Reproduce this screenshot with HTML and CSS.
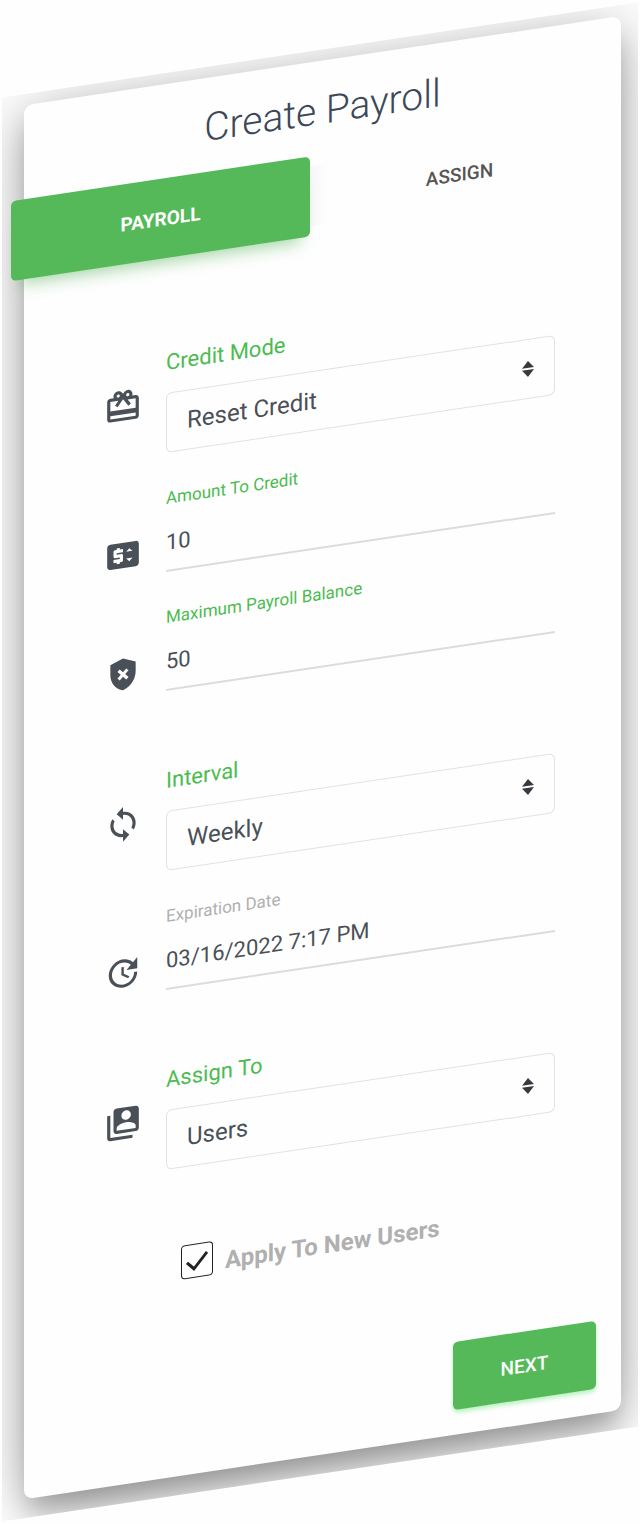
FILE: index.html
```html
<!DOCTYPE html>
<html lang="en">
<head>
<meta charset="utf-8">
<meta name="viewport" content="width=device-width, initial-scale=1">
<title>Create Payroll</title>
<link rel="stylesheet" href="styles.css">
</head>
<body>
<main class="stage">
  <form class="card">
    <h1 class="title">Create Payroll</h1>
    <nav class="tabs">
      <button type="button" class="tab tab-active">PAYROLL</button>
      <button type="button" class="tab">ASSIGN</button>
    </nav>

    <div class="groups">
      <section class="group">
        <div class="row">
          <svg class="icon" viewBox="0 0 24 24" aria-hidden="true"><path d="M20 6h-2.18c.11-.31.18-.65.18-1 0-1.66-1.34-3-3-3-1.05 0-1.96.54-2.5 1.35l-.5.67-.5-.68C10.96 2.54 10.05 2 9 2 7.34 2 6 3.34 6 5c0 .35.07.69.18 1H4c-1.11 0-1.99.89-1.99 2L2 19c0 1.11.89 2 2 2h16c1.11 0 2-.89 2-2V8c0-1.11-.89-2-2-2zm-5-2c.55 0 1 .45 1 1s-.45 1-1 1-1-.45-1-1 .45-1 1-1zM9 4c.55 0 1 .45 1 1s-.45 1-1 1-1-.45-1-1 .45-1 1-1zm11 15H4v-2h16v2zm0-5H4V8h5.08L7 10.83 8.62 12 11 8.76l1-1.36 1 1.36L15.38 12 17 10.83 14.92 8H20v6z"/></svg>
          <div class="field">
            <label class="label" for="mode">Credit Mode</label>
            <div class="select-wrap">
              <select class="select" id="mode"><option>Reset Credit</option></select>
              <svg class="arrows" viewBox="0 0 12 16" aria-hidden="true"><path d="M6 0l6 7H0zM6 16l6-7H0z"/></svg>
            </div>
          </div>
        </div>
        <div class="row row-line">
          <svg class="icon" viewBox="0 0 24 24" aria-hidden="true"><path d="M20 4H4c-1.11 0-1.99.89-1.99 2L2 18c0 1.11.89 2 2 2h16c1.11 0 2-.89 2-2V6c0-1.11-.89-2-2-2zm-8 6H8v1h3c.55 0 1 .45 1 1v3c0 .55-.45 1-1 1h-1v1H8v-1H6v-2h4v-1H7c-.55 0-1-.45-1-1V9c0-.55.45-1 1-1h1V7h2v1h2v2zm4 6.25l-2-2h4l-2 2zM14 10l2-2 2 2h-4z"/></svg>
          <div class="field field-line">
            <label class="label label-small" for="amount">Amount To Credit</label>
            <input class="input" id="amount" type="text" value="10">
          </div>
        </div>
        <div class="row row-line">
          <svg class="icon" viewBox="0 0 24 24" aria-hidden="true"><path d="M12 2L4 5v6.09c0 5.05 3.41 9.76 8 10.91 4.59-1.15 8-5.86 8-10.91V5l-8-3zm3.5 12.09l-1.41 1.41L12 13.42 9.91 15.5 8.5 14.09 10.59 12 8.5 9.91 9.91 8.5 12 10.59l2.09-2.09 1.41 1.41L13.42 12l2.08 2.09z"/></svg>
          <div class="field field-line">
            <label class="label label-small" for="max">Maximum Payroll Balance</label>
            <input class="input" id="max" type="text" value="50">
          </div>
        </div>
      </section>

      <section class="group">
        <div class="row">
          <svg class="icon" viewBox="0 0 24 24" aria-hidden="true"><path d="M12 4V1L8 5l4 4V6c3.31 0 6 2.69 6 6 0 1.01-.25 1.97-.7 2.8l1.46 1.46C19.54 15.03 20 13.57 20 12c0-4.42-3.58-8-8-8zm0 14c-3.31 0-6-2.69-6-6 0-1.01.25-1.97.7-2.8L5.24 7.74C4.46 8.97 4 10.43 4 12c0 4.42 3.58 8 8 8v3l4-4-4-4v3z"/></svg>
          <div class="field">
            <label class="label" for="interval">Interval</label>
            <div class="select-wrap">
              <select class="select" id="interval"><option>Weekly</option></select>
              <svg class="arrows" viewBox="0 0 12 16" aria-hidden="true"><path d="M6 0l6 7H0zM6 16l6-7H0z"/></svg>
            </div>
          </div>
        </div>
        <div class="row row-line">
          <svg class="icon" viewBox="0 0 24 24" aria-hidden="true"><path d="M21 10.12h-6.78l2.74-2.82c-2.73-2.7-7.15-2.8-9.88-.1-2.73 2.71-2.73 7.08 0 9.79s7.15 2.71 9.88 0C18.32 15.65 19 14.08 19 12.1h2c0 1.98-.88 4.55-2.64 6.29-3.51 3.48-9.21 3.48-12.72 0-3.5-3.47-3.53-9.11-.02-12.58s9.14-3.47 12.65 0L21 3v7.12zM12.5 8v4.25l3.5 2.08-.72 1.21L11 13V8h1.5z"/></svg>
          <div class="field field-line">
            <label class="label label-small label-muted" for="expires">Expiration Date</label>
            <input class="input" id="expires" type="text" value="03/16/2022 7:17 PM">
          </div>
        </div>
      </section>

      <section class="group">
        <div class="row">
          <svg class="icon" viewBox="0 0 24 24" aria-hidden="true"><path d="M4 6H2v14c0 1.1.9 2 2 2h14v-2H4V6zm16-4H8c-1.1 0-2 .9-2 2v12c0 1.1.9 2 2 2h12c1.1 0 2-.9 2-2V4c0-1.1-.9-2-2-2zm-6 2c1.66 0 3 1.34 3 3s-1.34 3-3 3-3-1.34-3-3 1.34-3 3-3zM20 16H8v-1.5c0-1.99 4-3 6-3s6 1.01 6 3V16z"/></svg>
          <div class="field">
            <label class="label" for="assign">Assign To</label>
            <div class="select-wrap">
              <select class="select" id="assign"><option>Users</option></select>
              <svg class="arrows" viewBox="0 0 12 16" aria-hidden="true"><path d="M6 0l6 7H0zM6 16l6-7H0z"/></svg>
            </div>
          </div>
        </div>
      </section>
    </div>

    <label class="check">
      <span class="check-box">
        <input class="check-input" type="checkbox" checked>
        <svg class="check-mark" viewBox="0 0 32 34" aria-hidden="true"><path d="M6 18l7 7L26 10"/></svg>
      </span>
      <span class="check-text">Apply To New Users</span>
    </label>

    <footer class="footer">
      <button type="button" class="next">NEXT</button>
    </footer>
  </form>
</main>
</body>
</html>
```
FILE: styles.css
```css
* {
  box-sizing: border-box;
}

body {
  margin: 0;
  padding: 50px 2px;
  background: #fefefe;
  color: #495057;
  font-family: Roboto, "Liberation Sans", sans-serif;
  font-size: 22px;
}

button,
input,
select {
  font: inherit;
  color: inherit;
}

.stage {
  padding: 11px 17px 19px 22px;
  overflow: hidden;
  background: #fefefe;
  transform: skewY(-8.5deg);
}

.card {
  padding: 26px 0 25px;
  border-radius: 9px;
  background: #fefefe;
  box-shadow: 0 18px 26px -4px rgba(0, 0, 0, 0.25), 0 10px 64px rgba(0, 0, 0, 0.3);
}

.title {
  margin: 0;
  color: #3c4858;
  font-size: 39px;
  font-weight: 300;
  line-height: 48px;
  text-align: center;
}

.tabs {
  position: relative;
  display: grid;
  grid-template-columns: 1fr 1fr;
  margin: 20px 12px 0 -13px;
}

.tabs::before {
  content: "";
  position: absolute;
  top: 10px;
  bottom: 10px;
  left: 50%;
  width: 20px;
  background: linear-gradient(to right, #f7f7f7, #fefefe);
}

.tab {
  height: 80px;
  padding: 0;
  border: 0;
  border-radius: 5px;
  background: none;
  color: #555;
  font-size: 19px;
  font-weight: 500;
}

.tab-active {
  position: relative;
  background: #55b959;
  color: #fff;
  font-weight: 700;
  box-shadow: 0 14px 16px -10px rgba(76, 175, 80, 0.5);
}

.groups {
  display: flex;
  flex-direction: column;
  gap: 74px;
  margin-top: 89px;
  padding: 0 66px 0 80px;
}

.group {
  display: flex;
  flex-direction: column;
  gap: 33px;
}

.row {
  display: flex;
  align-items: center;
  gap: 24px;
}

.row-line {
  align-items: flex-end;
}

.icon {
  flex: none;
  width: 38px;
  height: 38px;
  fill: #495057;
}

.row-line .icon {
  margin-bottom: 4px;
}

.field {
  display: flex;
  flex: 1;
  flex-direction: column;
  gap: 14px;
  min-width: 0;
}

.field-line {
  gap: 7px;
}

.label {
  color: #4cbb50;
  line-height: 32px;
}

.label-small {
  font-size: 17px;
  line-height: 24px;
}

.label-muted {
  color: #b0b0b0;
}

.select-wrap {
  position: relative;
}

.select {
  display: block;
  width: 100%;
  height: 60px;
  padding: 0 20px;
  border: 1px solid #e2e2e2;
  border-radius: 6px;
  background: #fefefe;
  font-size: 24px;
  appearance: none;
}

.arrows {
  position: absolute;
  top: 22px;
  right: 21px;
  width: 12px;
  height: 16px;
  fill: #343a40;
  pointer-events: none;
}

.input {
  width: 100%;
  height: 55px;
  padding: 0 0 2px;
  border: 0;
  border-bottom: 2px solid #dcdcdc;
  background: none;
}

.check {
  display: flex;
  align-items: center;
  gap: 12px;
  margin: 78px 0 0 157px;
  color: #b0b0b0;
  font-size: 24px;
  font-weight: 700;
}

.check-box {
  display: grid;
}

.check-input,
.check-mark {
  grid-area: 1 / 1;
  width: 32px;
  height: 34px;
}

.check-input {
  margin: 0;
  border: 1px solid #222;
  border-radius: 4px;
  appearance: none;
}

.check-mark {
  fill: none;
  stroke: #222;
  stroke-width: 3;
  pointer-events: none;
}

.check-text {
  padding-top: 8px;
  line-height: 26px;
}

.footer {
  display: flex;
  justify-content: flex-end;
  margin-top: 103px;
  padding-right: 25px;
}

.next {
  width: 143px;
  height: 68px;
  border: 0;
  border-radius: 5px;
  background: #55b959;
  color: #fff;
  font-size: 19px;
  font-weight: 500;
  box-shadow: 0 3px 4px rgba(85, 225, 100, 0.4);
}
```
